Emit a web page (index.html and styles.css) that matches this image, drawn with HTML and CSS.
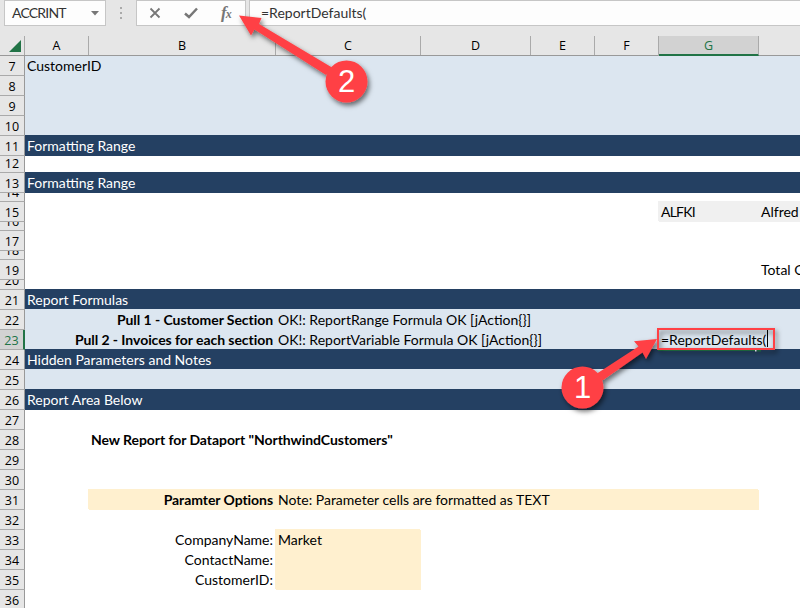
FILE: index.html
```html
<!DOCTYPE html>
<html lang="en">
<head>
<meta charset="utf-8">
<title>Report workbook</title>
<link rel="stylesheet" href="styles.css">
</head>
<body>
<div class="app">
  <div class="toolbar">
    <div class="namebox"><span class="caps">ACCRINT</span><svg width="8" height="5" viewBox="0 0 8 5"><path d="M0 0h8L4 4.5z" fill="#777"/></svg></div>
    <div class="grip"><i></i><i></i><i></i></div>
    <div class="buttons">
      <svg width="12" height="12" viewBox="0 0 12 12"><path d="M1.500 1.500l9 9M10.500 1.500l-9 9" stroke="#777" stroke-width="1.800" fill="none"/></svg>
      <svg width="14" height="12" viewBox="0 0 14 12"><path d="M1 6.500L5 10L13 1.500" stroke="#777" stroke-width="2.500" fill="none"/></svg>
      <span class="fx">f<small>x</small></span>
    </div>
    <div class="formula"><span>=ReportDefaults(</span></div>
  </div>
  <div class="cols">
    <div class="corner"><svg width="12" height="12" viewBox="0 0 12 12"><path d="M12 0V12H0z" fill="#217346"/></svg></div>
    <div>A</div><div>B</div><div>C</div><div>D</div><div>E</div><div>F</div><div class="sel">G</div><div class="last"></div>
  </div>
  <div class="sheet">
    <div class="row light"><b class="num">7</b><span class="a">CustomerID</span></div>
    <div class="row light"><b class="num">8</b></div>
    <div class="row light"><b class="num">9</b></div>
    <div class="row light"><b class="num">10</b></div>
    <div class="row dark"><b class="num">11</b><span class="a">Formatting Range</span></div>
    <div class="row h17"><b class="num">12</b></div>
    <div class="row dark"><b class="num">13</b><span class="a">Formatting Range</span></div>
    <div class="row h9"><b class="num">14</b></div>
    <div class="row"><b class="num">15</b><span class="g gray caps">ALFKI</span><span class="h gray">Alfred</span></div>
    <div class="row h9"><b class="num">16</b></div>
    <div class="row"><b class="num">17</b></div>
    <div class="row h9"><b class="num">18</b></div>
    <div class="row"><b class="num">19</b><span class="h">Total Orders</span></div>
    <div class="row h10"><b class="num">20</b></div>
    <div class="row dark"><b class="num">21</b><span class="a">Report Formulas</span></div>
    <div class="row light"><b class="num">22</b><span class="b right bold">Pull 1 - Customer Section</span><span class="c">OK!: ReportRange Formula OK [jAction{}]</span></div>
    <div class="row light"><b class="num active">23</b><span class="b right bold">Pull 2 - Invoices for each section</span><span class="c">OK!: ReportVariable Formula OK [jAction{}]</span></div>
    <div class="row dark"><b class="num">24</b><span class="a">Hidden Parameters and Notes</span></div>
    <div class="row light"><b class="num">25</b></div>
    <div class="row dark"><b class="num">26</b><span class="a">Report Area Below</span></div>
    <div class="row"><b class="num">27</b></div>
    <div class="row"><b class="num">28</b><span class="b bold">New Report for Dataport "NorthwindCustomers"</span></div>
    <div class="row"><b class="num">29</b></div>
    <div class="row"><b class="num">30</b></div>
    <div class="row"><b class="num">31</b><span class="b right bold cream">Paramter Options</span><span class="c wide cream">Note: Parameter cells are formatted as TEXT</span></div>
    <div class="row"><b class="num">32</b></div>
    <div class="row"><b class="num">33</b><span class="b right">CompanyName:</span><span class="c cream">Market</span></div>
    <div class="row"><b class="num">34</b><span class="b right">ContactName:</span><span class="c cream"></span></div>
    <div class="row"><b class="num">35</b><span class="b right">CustomerID:</span><span class="c cream"></span></div>
    <div class="row"><b class="num">36</b></div>
  </div>
  <div class="editor"><span>=ReportDefaults(</span><i class="caret"></i></div>
  <svg class="notes" width="800" height="608" viewBox="0 0 800 608">
    <defs><filter id="s" x="-30%" y="-30%" width="160%" height="160%"><feDropShadow dx="2" dy="3" stdDeviation="2.500" flood-color="#000" flood-opacity=".55"/></filter></defs>
    <path d="M658 350H755M757 350.500H761" stroke="#217346" stroke-width="2"/>
    <path d="M755 350.500H756.500" stroke="#fff" stroke-width="2"/>
    <g filter="url(#s)" fill="#ff4144">
      <path d="M239 15.500L261.500 18L259 24L332 67.500L326 75L254.500 29.500L251 35.500Z"/>
      <circle cx="346.500" cy="81.500" r="21"/>
    </g>
    <g filter="url(#s)" fill="#ff4144">
      <rect x="658" y="329" width="116" height="20" fill="none" stroke="#ff4144" stroke-width="2"/>
      <path d="M657 339L634 341.300L638.500 346.500L597 373.500L602.500 380.500L642.500 352.500L646 359Z"/>
      <circle cx="582.500" cy="387.500" r="21"/>
    </g>
    <text x="346.500" y="92" class="mark">2</text>
    <text x="582.500" y="398" class="mark">1</text>
  </svg>
</div>
</body>
</html>
```
FILE: styles.css
```css
* { box-sizing: border-box; }
body { margin: 0; background: #fff; }
.app { position: relative; width: 800px; height: 608px; overflow: hidden; font: 14px/20px Lato, "Liberation Sans", sans-serif; color: #000; }
.toolbar { display: flex; height: 36px; background: #e6e6e6; align-items: flex-start; padding-left: 4px; color: #333; }
.toolbar > div { height: 26px; display: flex; align-items: center; }
.namebox, .buttons, .formula { background: #fdfdfd; border: 1px solid #c6c6c6; }
.toolbar .namebox { width: 102px; justify-content: space-between; padding: 0 6px 0 7px; }
.caps { letter-spacing: -.8px; }
.toolbar .grip { width: 30px; flex-direction: column; justify-content: center; gap: 3px; }
.grip i { width: 2px; height: 2px; background: #aaa; }
.buttons { width: 110px; padding-left: 12px; gap: 23px; }
.fx { font: italic bold 17px/20px "Liberation Serif", serif; color: #777; }
.fx small { font-size: 12px; margin-left: -1px; }
.formula { flex: 1; margin-left: 3px; padding: 0 0 0 11px; border-right: 0; }
.cols { position: relative; z-index: 1; display: grid; grid-template-columns: 25px 64px 187px 145px 110px 64px 64px 100px 1fr; height: 20px; background: #e6e6e6; border-bottom: 1px solid #999; text-align: center; font: 12.5px/19px "Open Sans", sans-serif; }
.cols div { border-right: 1px solid #aaa; height: 19px; line-height: 19px; }
.cols .corner { display: flex; justify-content: flex-end; padding: 4px 3px 0 0; }
.cols .last { border: 0; }
.cols .sel { height: 20px; background: #d2d2d2; color: #217346; border-bottom: 2px solid #217346; box-shadow: -1px 0 #aaa; }
.row { display: grid; grid-template-columns: 25px 64px 187px 145px 110px 64px 64px 100px 1fr; grid-template-rows: 100%; height: 20px; white-space: nowrap; }
.h17 { height: 17px; }
.h9 { height: 9px; }
.h10 { height: 10px; }
.num { position: relative; font: 12.5px/17px "Open Sans", sans-serif; background: #e6e6e6; border-right: 1px solid #999; border-bottom: 1px solid #aaa; overflow: hidden; display: flex; flex-direction: column; justify-content: flex-end; align-items: center; }
.active { background: #d2d2d2; color: #217346; border-right: 2px solid #217346; }
.row span { grid-row: 1; padding: 0 2px; line-height: 20px; }
.a { grid-column: 2; }
.b { grid-column: 3; }
.c { grid-column: 4; }
.g { grid-column: 8; }
.h { grid-column: 9; }
.row .wide { grid-column: 4 / 9; }
.row .right { display: flex; justify-content: flex-end; padding-right: 3px; }
.bold { font-weight: 700; letter-spacing: -.06px; }
.light { background: #dce6f0; box-shadow: 0 -1px #dce6f0; }
.dark { background: #244062; box-shadow: 0 -1px #244062; color: #fff; }
.dark .num { color: #000; }
.cream { background: #fff0cf; box-shadow: -1px -1px #fff0cf; }
.gray { background: #f0f0f0; box-shadow: -1px -1px #f0f0f0; }
.editor { position: absolute; left: 659px; top: 330px; width: 114px; height: 19px; padding-left: 2px; background: #dce6f0; line-height: 20px; display: flex; }
.caret { width: 1px; height: 17px; margin-left: 1px; background: #000; }
.notes { position: absolute; left: 0; top: 0; z-index: 2; }
.mark { font: 31px "Liberation Sans", sans-serif; fill: #fff; text-anchor: middle; }
```
